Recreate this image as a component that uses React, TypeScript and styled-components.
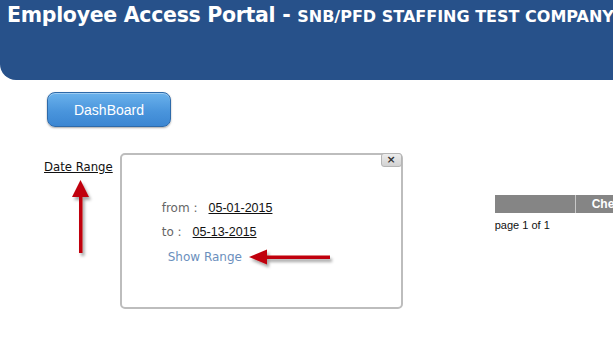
import React from "react";
import styled, { createGlobalStyle } from "styled-components";

const Global = createGlobalStyle`
  html, body { margin: 0; padding: 0; background: #ffffff; }
  body { width: 613px; height: 340px; overflow: hidden; }
`;

const Page = styled.div`
  position: relative;
  width: 613px;
  height: 340px;
  overflow: hidden;
  background: #fff;
`;

const Header = styled.header`
  height: 80px;
  background: #27518a;
  border-bottom-left-radius: 16px;
  padding: 3px 0 0 7px;
  box-sizing: border-box;
  white-space: nowrap;
  font-family: "DejaVu Sans", Verdana, sans-serif;
  font-weight: bold;
  color: #ffffff;
`;

const Title = styled.span`
  font-size: 20.5px;
  letter-spacing: -0.3px;
`;

const Company = styled.span`
  font-size: 16px;
  letter-spacing: 0px;
`;

const ButtonRow = styled.div`
  padding: 12px 0 0 47px;
`;

const DashButton = styled.button`
  width: 124px;
  height: 35px;
  border-radius: 8px;
  border: 1px solid #2e6aa9;
  background: linear-gradient(#6ab2ec, #4a95dc 55%, #3b86d2);
  box-shadow: 0 1px 2px rgba(0, 0, 0, 0.35), inset 0 1px 0 rgba(255, 255, 255, 0.35);
  color: #fff;
  font-family: "Liberation Sans", Arial, sans-serif;
  font-size: 14px;
  padding: 0;
`;

const Content = styled.div`
  display: flex;
  align-items: flex-start;
  margin-top: 26px;
  padding-left: 44px;
  & > * { flex-shrink: 0; }
`;

const DateLink = styled.a`
  margin-top: 7px;
  font-family: "DejaVu Sans", Verdana, sans-serif;
  font-size: 11.7px;
  color: #111;
  text-decoration: underline;
  white-space: nowrap;
`;

const Popup = styled.div`
  position: relative;
  margin-left: 7px;
  width: 283px;
  height: 156px;
  box-sizing: border-box;
  border: 2px solid #bdbdbd;
  border-radius: 5px;
  padding: 46px 0 0 40px;
`;

const CloseBtn = styled.div`
  position: absolute;
  top: -2px;
  right: -1px;
  width: 19px;
  height: 12px;
  border: 1px solid #b5b5b5;
  border-radius: 3px;
  background: linear-gradient(#ededed, #d2d2d2);
  font-family: "DejaVu Sans", sans-serif;
  font-size: 11px;
  font-weight: bold;
  line-height: 11px;
  text-align: center;
  color: #333;
`;

const Field = styled.div<{ $gap: number }>`
  display: flex;
  align-items: baseline;
  gap: ${(p) => p.$gap}px;
  height: 24px;
`;

const Label = styled.span`
  font-family: "DejaVu Sans", Verdana, sans-serif;
  font-size: 12px;
  color: #666;
`;

const DateValue = styled.a`
  font-family: "Liberation Sans", Arial, sans-serif;
  font-size: 12.5px;
  color: #111;
  text-decoration: underline;
`;

const ShowRange = styled.a`
  display: block;
  margin: 1px 0 0 6px;
  font-family: "DejaVu Sans", Verdana, sans-serif;
  font-size: 12px;
  color: #6b8fbd;
`;

const TableArea = styled.div`
  margin: 42px 0 0 92px;
`;

const TableHead = styled.div`
  display: flex;
  height: 18px;
  background: #858585;
  width: 200px;
`;

const HeadCell = styled.div<{ $w: number }>`
  width: ${(p) => p.$w}px;
  border-right: 1px solid #c8c8c8;
  font-family: "Liberation Sans", Arial, sans-serif;
  font-size: 12px;
  font-weight: bold;
  color: #fff;
  line-height: 18px;
  padding-left: 16px;
  box-sizing: border-box;
  white-space: nowrap;
`;

const PageInfo = styled.div`
  margin-top: 6px;
  font-family: "Liberation Sans", Arial, sans-serif;
  font-size: 11px;
  color: #111;
`;

const Annotations = styled.svg`
  position: absolute;
  left: 0;
  top: 0;
  pointer-events: none;
`;

export default function App() {
  return (
    <Page>
      <Global />
      <Header>
        <Title>Employee Access Portal - </Title>
        <Company>SNB/PFD STAFFING TEST COMPANY</Company>
      </Header>
      <ButtonRow>
        <DashButton>DashBoard</DashButton>
      </ButtonRow>
      <Content>
        <DateLink>Date Range</DateLink>
        <Popup>
          <CloseBtn>×</CloseBtn>
          <Field $gap={11}>
            <Label>from :</Label>
            <DateValue>05-01-2015</DateValue>
          </Field>
          <Field $gap={11}>
            <Label>to :</Label>
            <DateValue>05-13-2015</DateValue>
          </Field>
          <ShowRange>Show Range</ShowRange>
        </Popup>
        <TableArea>
          <TableHead>
            <HeadCell $w={81} />
            <HeadCell $w={119}>Check</HeadCell>
          </TableHead>
          <PageInfo>page 1 of 1</PageInfo>
        </TableArea>
      </Content>
      <Annotations width="613" height="340" viewBox="0 0 613 340">
        <defs>
          <filter id="sh" x="-50%" y="-50%" width="200%" height="200%">
            <feDropShadow dx="2" dy="3" stdDeviation="1.5" floodColor="#000" floodOpacity="0.35" />
          </filter>
        </defs>
        <g filter="url(#sh)" fill="#c0000c">
          <rect x="79" y="194" width="3.5" height="59" />
          <polygon points="72,197 89,197 80.5,180" />
          <rect x="264" y="255.5" width="66" height="3.5" />
          <polygon points="267,249.5 267,264.5 249,257" />
        </g>
      </Annotations>
    </Page>
  );
}
